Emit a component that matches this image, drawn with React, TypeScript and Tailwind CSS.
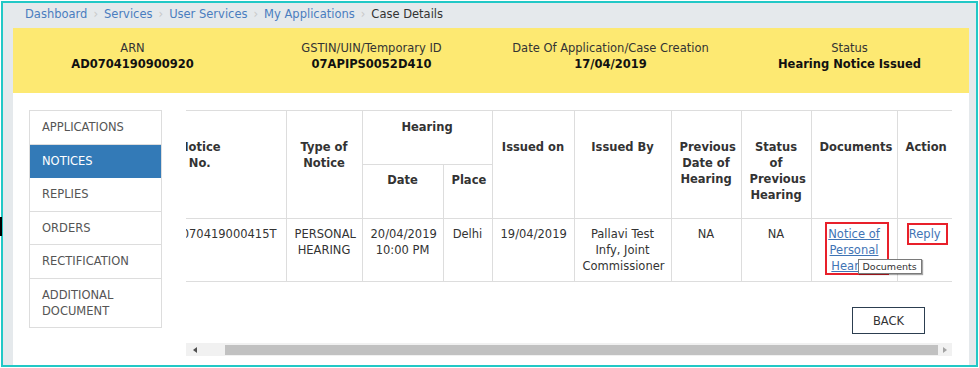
import { useLayoutEffect, useRef } from "react";

const crumbs = ["Dashboard", "Services", "User Services", "My Applications"];

const caseInfo = [
    { label: "ARN", value: "AD0704190900920" },
    { label: "GSTIN/UIN/Temporary ID", value: "07APIPS0052D410" },
    { label: "Date Of Application/Case Creation", value: "17/04/2019" },
    { label: "Status", value: "Hearing Notice Issued" },
];

const tabs = ["APPLICATIONS", "NOTICES", "REPLIES", "ORDERS", "RECTIFICATION", "ADDITIONAL DOCUMENT"];

export default function App() {
    const scrollRef = useRef<HTMLDivElement>(null);

    // table is scrolled a little to the right in the screenshot
    useLayoutEffect(() => {
        if (scrollRef.current) scrollRef.current.scrollLeft = 30;
    }, []);

    const th = "border border-[#ddd] align-top px-2 font-bold text-[#333]";
    const td = "border border-[#ddd] align-top px-2 pt-[7px] text-[#333]";

    return (
        <div className="relative h-[368px] w-[979px] bg-white p-px font-['DejaVu_Sans',Verdana,sans-serif] text-[11.5px] leading-[16px]">
            <div className="absolute left-0 top-[217px] h-[19px] w-[2px] bg-black" />

            <div className="flex h-full flex-col border-2 border-[#22c8c6] bg-[#e5e9ec] pl-[10px] pr-[7px]">
                {/* breadcrumb */}
                <div className="flex h-[25px] items-start pl-[12px] pt-[3px]">
                    {crumbs.map((c) => (
                        <span key={c} className="flex items-center">
                            <span className="text-[#4a7dbf]">{c}</span>
                            <span className="px-[6px] text-[#c8c8c8]">›</span>
                        </span>
                    ))}
                    <span className="text-[#333]">Case Details</span>
                </div>

                {/* case summary */}
                <div className="grid h-[65px] grid-cols-4 bg-[#fde972] pt-[12px] text-center">
                    {caseInfo.map((item) => (
                        <div key={item.label}>
                            <p className="text-[#333]">{item.label}</p>
                            <p className="font-bold text-[#111]">{item.value}</p>
                        </div>
                    ))}
                </div>

                {/* content */}
                <div className="flex flex-1 gap-[24px] bg-white pl-[16px] pr-[17px] pt-[17px]">
                    <div className="w-[133px] self-start border border-[#ddd] border-b-0">
                        {tabs.map((t) => (
                            <div
                                key={t}
                                className={`border-b py-[8.25px] pl-[12px] pr-2 ${t === "NOTICES" ? "border-[#337ab7] bg-[#337ab7] text-white" : "border-[#ddd] text-[#555]"}`}
                            >
                                {t === "ADDITIONAL DOCUMENT" ? (
                                    <>
                                        ADDITIONAL
                                        <br />
                                        DOCUMENT
                                    </>
                                ) : (
                                    t
                                )}
                            </div>
                        ))}
                    </div>

                    <div className="w-[766px]">
                        <div ref={scrollRef} className="overflow-hidden">
                            <div className="w-[796px]">
                                <table className="w-[796px] table-fixed border-collapse">
                                    <colgroup>
                                        <col className="w-[130px]" />
                                        <col className="w-[76px]" />
                                        <col className="w-[81px]" />
                                        <col className="w-[49px]" />
                                        <col className="w-[82px]" />
                                        <col className="w-[97px]" />
                                        <col className="w-[70px]" />
                                        <col className="w-[70px]" />
                                        <col className="w-[86px]" />
                                        <col className="w-[55px]" />
                                    </colgroup>
                                    <thead>
                                        <tr className="h-[54px]">
                                            <th rowSpan={2} className={`${th} border-l-0 pr-[50px] pt-[28px]`}>
                                                Notice
                                                <br />
                                                No.
                                            </th>
                                            <th rowSpan={2} className={`${th} pt-[28px]`}>
                                                Type of
                                                <br />
                                                Notice
                                            </th>
                                            <th colSpan={2} className={`${th} pt-2`}>Hearing</th>
                                            <th rowSpan={2} className={`${th} pt-[28px]`}>Issued on</th>
                                            <th rowSpan={2} className={`${th} pt-[28px]`}>Issued By</th>
                                            <th rowSpan={2} className={`${th} px-1 pt-[28px]`}>
                                                Previous
                                                <br />
                                                Date of
                                                <br />
                                                Hearing
                                            </th>
                                            <th rowSpan={2} className={`${th} px-1 pt-[28px]`}>
                                                Status
                                                <br />
                                                of
                                                <br />
                                                Previous
                                                <br />
                                                Hearing
                                            </th>
                                            <th rowSpan={2} className={`${th} pt-[28px]`}>Documents</th>
                                            <th rowSpan={2} className={`${th} border-r-0 pt-[28px]`}>Action</th>
                                        </tr>
                                        <tr className="h-[54px]">
                                            <th className={`${th} pt-[7px]`}>Date</th>
                                            <th className={`${th} pt-[7px]`}>Place</th>
                                        </tr>
                                    </thead>
                                    <tbody>
                                        <tr className="h-[63px] text-center">
                                            <td className={`${td} border-l-0`}>ZD070419000415T</td>
                                            <td className={td}>
                                                PERSONAL
                                                <br />
                                                HEARING
                                            </td>
                                            <td className={td}>
                                                20/04/2019
                                                <br />
                                                10:00 PM
                                            </td>
                                            <td className={td}>Delhi</td>
                                            <td className={td}>19/04/2019</td>
                                            <td className={`${td} px-1`}>
                                                Pallavi Test
                                                <br />
                                                Infy, Joint
                                                <br />
                                                Commissioner
                                            </td>
                                            <td className={td}>NA</td>
                                            <td className={td}>NA</td>
                                            <td className={`${td} relative`}>
                                                <a className="text-[#3f74b5] underline">
                                                    Notice of
                                                    <br />
                                                    Personal
                                                    <br />
                                                    Hearing
                                                </a>
                                                <span className="absolute left-[13px] top-[3px] h-[53px] w-[64px] border-2 border-[#e8202a]" />
                                                <span className="absolute left-[46px] top-[40px] border border-[#7a7a7a] bg-white px-[4px] text-[9.5px] leading-[13px] text-[#333] shadow-[1px_1px_1px_rgba(0,0,0,0.35)]">
                                                    Documents
                                                </span>
                                            </td>
                                            <td className={`${td} relative border-r-0`}>
                                                <a className="text-[#3f74b5]">Reply</a>
                                                <span className="absolute left-[9px] top-[4px] h-[22px] w-[41px] border-2 border-[#e8202a]" />
                                            </td>
                                        </tr>
                                    </tbody>
                                </table>

                                <div className="flex justify-end pr-[27px] pt-[25px]">
                                    <button className="h-[27px] w-[73px] border border-[#2c3e50] bg-white text-[#333]">
                                        BACK
                                    </button>
                                </div>
                            </div>
                        </div>

                        {/* horizontal scrollbar */}
                        <div className="mt-[9px] flex h-[13px] items-center bg-[#f1f1f1]">
                            <div className="flex w-[17px] justify-center">
                                <span className="h-0 w-0 border-y-[3px] border-r-[4px] border-y-transparent border-r-[#505050]" />
                            </div>
                            <div className="ml-[22px] h-[10px] flex-1 bg-[#c1c1c1]" />
                            <div className="flex w-[14px] justify-center">
                                <span className="h-0 w-0 border-y-[3px] border-l-[4px] border-y-transparent border-l-[#a3a3a3]" />
                            </div>
                        </div>
                    </div>
                </div>
            </div>
        </div>
    );
}
